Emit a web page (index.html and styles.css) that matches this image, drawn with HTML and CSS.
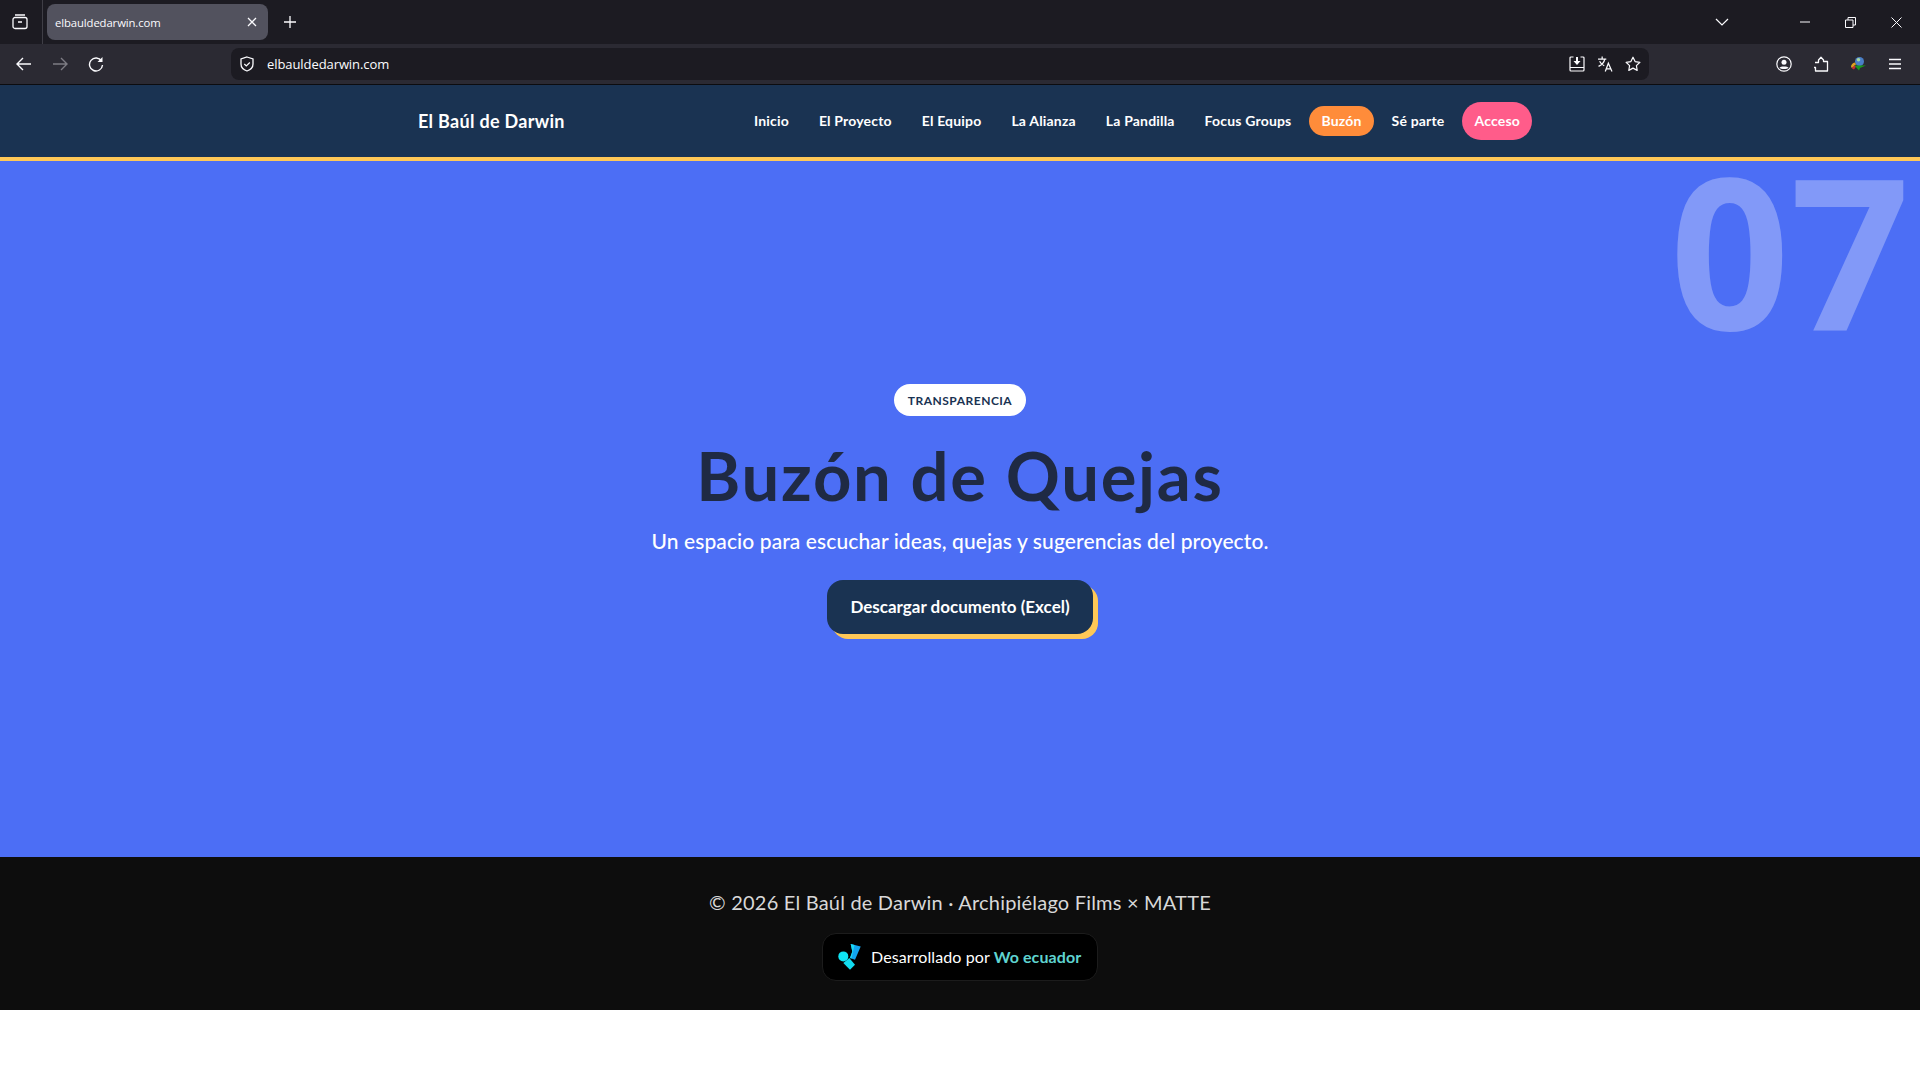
FILE: index.html
```html
<!DOCTYPE html>
<html lang="es">
<head>
<meta charset="utf-8">
<title>El Baúl de Darwin</title>
<link rel="stylesheet" href="styles.css">
</head>
<body>
<div class="browser">
  <div class="tabstrip">
    <div class="tabgroup">
      <svg class="ic" width="16" height="16" viewBox="0 0 16 16"><path d="M3 1h10M1 5.500a2 2 0 0 1 2-2h10a2 2 0 0 1 2 2v7a2 2 0 0 1-2 2H3a2 2 0 0 1-2-2zM6 8h4" fill="none" stroke="#fbfbfe" stroke-width="1.300"/></svg>
    </div>
    <div class="tab">
      <span class="tabtitle">elbauldedarwin.com</span>
      <svg width="10" height="10" viewBox="0 0 10 10"><path d="M1 1l8 8M9 1l-8 8" stroke="#fbfbfe" stroke-width="1.300"/></svg>
    </div>
    <svg class="newtab" width="14" height="14" viewBox="0 0 14 14"><path d="M7 1v12M1 7h12" stroke="#fbfbfe" stroke-width="1.300"/></svg>
    <div class="spacer"></div>
    <svg class="chev" width="14" height="8" viewBox="0 0 14 8"><path d="M1 1l6 6 6-6" fill="none" stroke="#fbfbfe" stroke-width="1.200"/></svg>
    <div class="winctl">
      <svg width="10" height="10" viewBox="0 0 10 10"><path d="M0 5h10" stroke="#fbfbfe" stroke-width="1"/></svg>
      <svg width="11" height="11" viewBox="0 0 11 11"><path d="M.5 3h7.500v7.500H.5zM3 3V.5h7.500V8H8" fill="none" stroke="#fbfbfe" stroke-width="1"/></svg>
      <svg width="11" height="11" viewBox="0 0 11 11"><path d="M.5.5l10 10M10.500.5l-10 10" stroke="#fbfbfe" stroke-width="1"/></svg>
    </div>
  </div>
  <div class="toolbar">
    <div class="navbtns">
      <svg width="16" height="14" viewBox="0 0 16 14"><path d="M1 7h14M7 1L1 7l6 6" fill="none" stroke="#fbfbfe" stroke-width="1.400"/></svg>
      <svg width="16" height="14" viewBox="0 0 16 14"><path d="M15 7H1M9 1l6 6-6 6" fill="none" stroke="#7d7c84" stroke-width="1.400"/></svg>
      <svg width="16" height="16" viewBox="0 0 16 16"><path d="M13.500 5A6.500 6.500 0 1 0 14.500 9" fill="none" stroke="#fbfbfe" stroke-width="1.400"/><path d="M14.500 1v5h-5z" fill="#fbfbfe"/></svg>
    </div>
    <div class="urlbar">
      <svg width="16" height="16" viewBox="0 0 16 16"><path d="M8 1l6 2v5c0 3.500-3 6-6 7-3-1-6-3.500-6-7V3z" fill="none" stroke="#fbfbfe" stroke-width="1.300"/><path d="M5.300 8l2 2 3.500-3.500" fill="none" stroke="#fbfbfe" stroke-width="1.200"/></svg>
      <span class="urltext">elbauldedarwin.com</span>
      <div class="spacer"></div>
      <div class="urlicons">
        <svg width="16" height="16" viewBox="0 0 16 16"><path d="M4.500 1H2a1 1 0 0 0-1 1v12a1 1 0 0 0 1 1h12a1 1 0 0 0 1-1V2a1 1 0 0 0-1-1h-2.500M1 11.500h14" fill="none" stroke="#fbfbfe" stroke-width="1.200"/><path d="M7 1h2v4h2.500L8 9 4.500 5H7z" fill="#fbfbfe"/></svg>
        <svg width="16" height="16" viewBox="0.500 0 14.500 15.500"><path d="M1 3h8M5 .5V3M7.500 3C7 6 4.500 8.500 1.500 10M2.500 5C3.500 7 5 8.500 7 9.500M8 15l3-8 3.500 8M9 12.500h4.500" fill="none" stroke="#fbfbfe" stroke-width="1.200"/></svg>
        <svg width="16" height="16" viewBox="0 0 16 16"><path d="M8 1.200l2.100 4.400 4.800.7-3.500 3.300.8 4.800L8 12.100l-4.200 2.300.8-4.800L1.100 6.300l4.800-.7z" fill="none" stroke="#fbfbfe" stroke-width="1.200" stroke-linejoin="round"/></svg>
      </div>
    </div>
    <div class="tools">
      <svg width="16" height="16" viewBox="0 0 16 16"><circle cx="8" cy="8" r="7.200" fill="none" stroke="#fbfbfe" stroke-width="1.200"/><circle cx="8" cy="6.300" r="2.500" fill="#fbfbfe"/><path d="M3.500 11.500c1-1.500 8-1.500 9 0-1 2-8 2-9 0z" fill="#fbfbfe"/></svg>
      <svg width="16" height="16" viewBox="0 0 16 16"><path d="M2 6.500h3.500V4L8 1.200 10.500 4v1.500h4V15h-12v-3.500H1" fill="none" stroke="#fbfbfe" stroke-width="1.300" stroke-linejoin="round"/></svg>
      <svg width="16" height="16" viewBox="0 0 16 16"><circle cx="9.500" cy="5.500" r="4.500" fill="#4a7fc8"/><circle cx="8.500" cy="3.800" r="1.800" fill="#a8d8a0"/><path d="M1 11.500a5 5 0 0 1 4-5l1 2a3 3 0 0 0-2 3z" fill="#e0a020"/><path d="M2 12.500a4 4 0 0 1 3-3l1 1-2 3z" fill="#c83030"/><path d="M4.500 9.500H16l-6 2.500-1 2.500z" fill="#1a9a20"/></svg>
      <svg width="16" height="12" viewBox="0 0 16 12"><path d="M2 1.500h12M2 6h12M2 10.500h12" stroke="#fbfbfe" stroke-width="1.300"/></svg>
    </div>
  </div>
  <div class="chromeline"></div>
</div>

<nav class="sitenav">
  <a class="brand">El Baúl de Darwin</a>
  <ul class="menu">
    <li><a class="link">Inicio</a></li>
    <li><a class="link">El Proyecto</a></li>
    <li><a class="link">El Equipo</a></li>
    <li><a class="link">La Alianza</a></li>
    <li><a class="link">La Pandilla</a></li>
    <li><a class="link">Focus Groups</a></li>
    <li><a class="link active">Buzón</a></li>
    <li><a class="link">Sé parte</a></li>
    <li><a class="link cta">Acceso</a></li>
  </ul>
</nav>

<main class="hero">
  <div class="bignum">07</div>
  <span class="tag">TRANSPARENCIA</span>
  <h1 class="title">Buzón de Quejas</h1>
  <p class="lead">Un espacio para escuchar ideas, quejas y sugerencias del proyecto.</p>
  <a class="download">Descargar documento (Excel)</a>
</main>

<footer class="footer">
  <p class="copy">© 2026 El Baúl de Darwin · Archipiélago Films × MATTE</p>
  <a class="badge">
    <svg width="23" height="26" viewBox="0 0 23 26"><circle cx="5.300" cy="12.400" r="5" fill="#0fe4f4"/><path d="M12.700 0l10 2.400L17 15.700 12 14l2.300-6.600z" fill="#12a4f0"/><path d="M12.700 0l3.800.9-3 13.600-1.500-.5 2.300-6.600z" fill="#1ad8f5"/><path d="M5.300 19l6-5 5.700 6.700-5 5z" fill="#12dcf0"/></svg>
    <span class="badgetext">Desarrollado por <b class="wo">Wo ecuador</b></span>
  </a>
</footer>
</body>
</html>
```
FILE: styles.css
```css
* { box-sizing: border-box; }
html, body { margin: 0; padding: 0; background: #fff; }
body { font-family: "Lato", "Liberation Sans", sans-serif; }
svg { display: block; flex: none; }
.spacer { flex: 1; }

.browser { font-family: "Open Sans", "Noto Sans", sans-serif; color: #fbfbfe; }
.tabstrip { height: 44px; background: #1c1b22; display: flex; align-items: center; }
.tabgroup { width: 43px; height: 44px; border-right: 1px solid #3f3e46; display: flex; align-items: center; justify-content: center; padding-right: 3px; }
.tab { width: 221px; height: 36px; margin-left: 4px; padding: 0 11px 0 8px; background: #52525e; border-radius: 8px; display: flex; align-items: center; justify-content: space-between; }
.tabtitle { font-size: 11.300px; letter-spacing: -0.1px; }
.newtab { margin-left: 15px; }
.chev { margin-right: 71px; }
.winctl { display: flex; align-items: center; gap: 35px; margin-right: 18px; }
.toolbar { height: 40px; background: #2b2a33; display: flex; align-items: center; }
.navbtns { display: flex; align-items: center; gap: 20px; width: 231px; padding-left: 16px; }
.urlbar { width: 1418px; height: 32px; background: #1c1b22; border-radius: 8px; display: flex; align-items: center; padding: 0 8px; gap: 12px; }
.urltext { font-size: 13px; letter-spacing: -0.08px; }
.urlicons { display: flex; gap: 12px; align-items: center; }
.tools { flex: 1; display: flex; align-items: center; gap: 21px; padding-left: 127px; }
.chromeline { height: 1px; background: #0c0c0f; }

.sitenav { height: 76px; background: #1a3352; border-bottom: 4px solid #ffc857; display: flex; align-items: center; justify-content: space-between; padding: 0 388px 0 418px; }
.brand { color: #fff; font-weight: 700; font-size: 18px; letter-spacing: .3px; }
.menu { list-style: none; margin: 0; padding: 0; display: flex; align-items: center; gap: 6px; }
.link { display: block; color: #fff; font-weight: 700; font-size: 14px; line-height: 18px; letter-spacing: .18px; padding: 6px 12px; border-radius: 15px; }
.active { background: #ff8c3a; }
.cta { background: #ff5c8a; padding: 10px 12px; border-radius: 19px; }

.hero { position: relative; height: 696px; background: #4c6ef5; display: flex; flex-direction: column; align-items: center; justify-content: center; }
.bignum { position: absolute; top: 3px; right: 10px; font-family: "Open Sans", sans-serif; font-weight: 700; font-size: 210px; line-height: 170px; color: rgba(255,255,255,.3); }
.tag { background: #fff; color: #1a3352; font-weight: 700; font-size: 12px; letter-spacing: .5px; height: 32px; width: 132px; justify-content: center; border-radius: 16px; display: flex; align-items: center; }
.title { margin: 19px 0 11px; color: #1f2a44; font-weight: 700; font-size: 67px; line-height: 80px; letter-spacing: 1.7px; }
.lead { margin: 0 0 25px; color: #fff; font-size: 21px; font-weight: 500; line-height: 29px; letter-spacing: .1px; }
.download { display: block; background: #1a3352; color: #fff; font-weight: 700; font-size: 17px; line-height: 24px; padding: 15px 23.500px; border-radius: 16px; box-shadow: 5px 5px 0 #ffc857; }

.footer { height: 153px; background: #0d0d0d; display: flex; flex-direction: column; align-items: center; padding-top: 32px; }
.copy { margin: 0 0 18px; color: #d8d8d8; font-size: 20px; line-height: 26px; letter-spacing: .2px; }
.badge { display: flex; align-items: center; gap: 10px; height: 48px; width: 276px; padding-left: 15px; background: #000; border: 1px solid #1c1c1c; border-radius: 14px; color: #fff; font-size: 16px; letter-spacing: .1px; }
.badgetext { display: block; margin-bottom: 2px; }
.wo { color: #5fd4d0; font-weight: 700; }
```
